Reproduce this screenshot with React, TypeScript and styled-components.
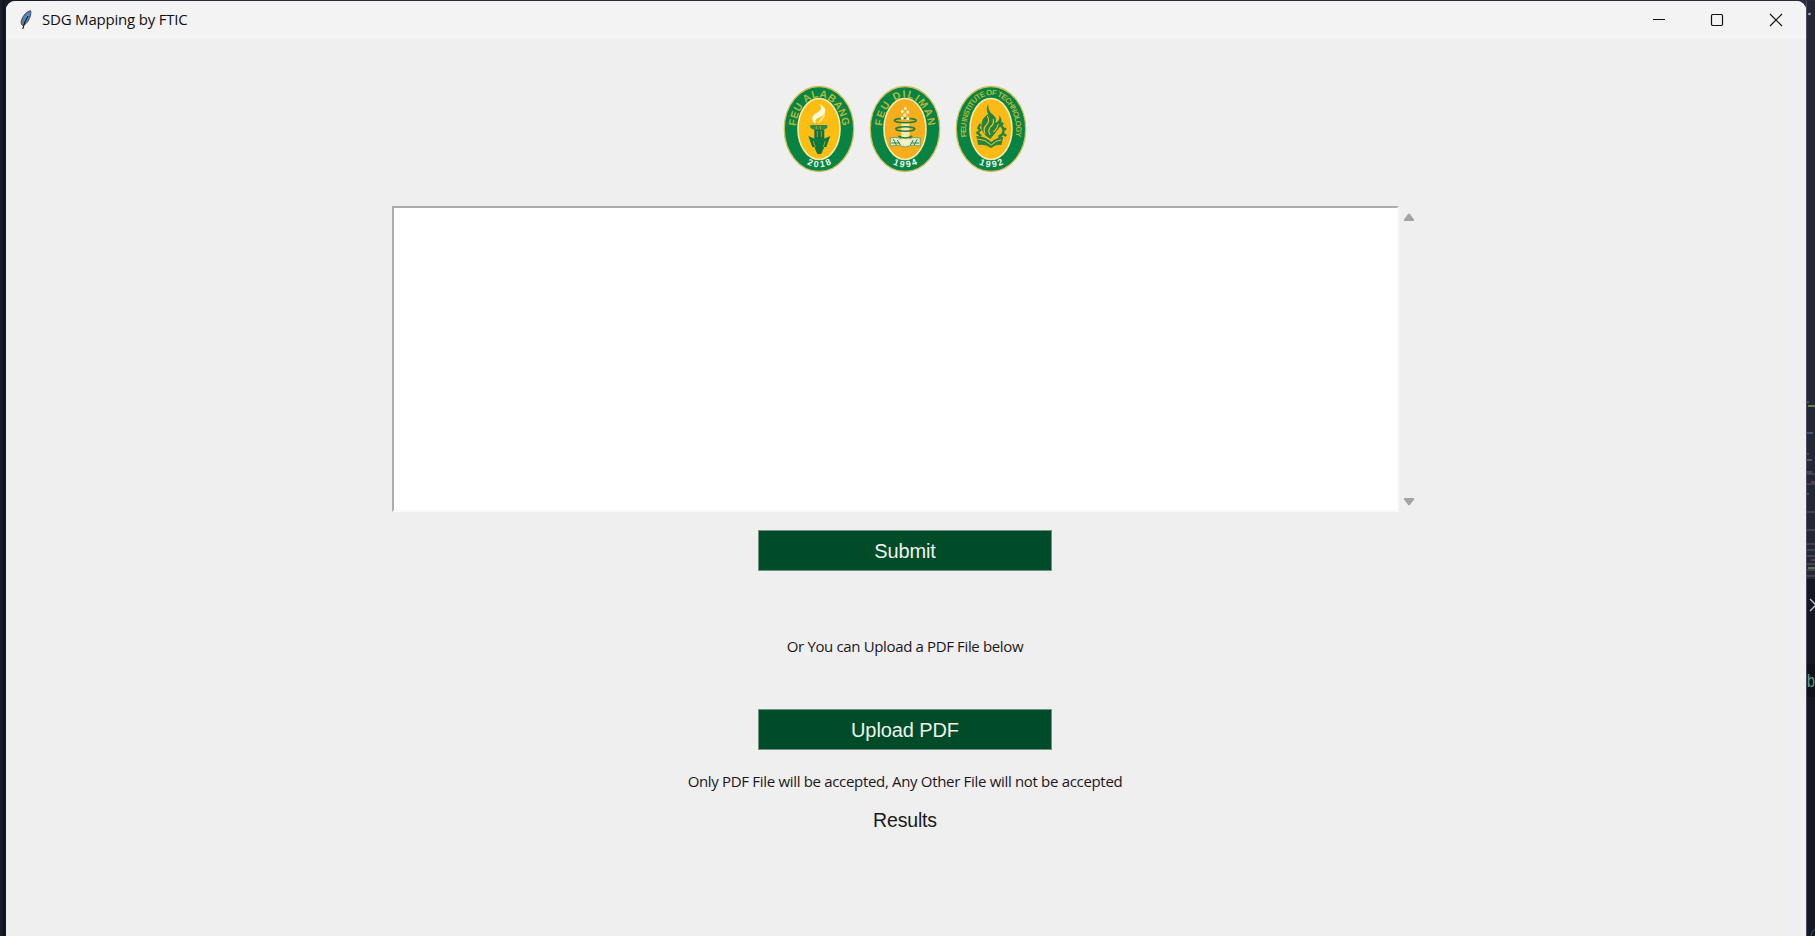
import React from "react";
import styled, { createGlobalStyle } from "styled-components";

const Global = createGlobalStyle`
  * { box-sizing: border-box; }
  html, body { margin: 0; overflow: hidden; background: #1d1e2d; }
`;
const Desktop = styled.div`
  display: grid;
  grid-template-columns: 6px 1800px 9px;
  height: 936px;
  padding-top: 1px;
  background: linear-gradient(90deg, #171926 0, #171926 30px, #2b2c3e 60px);
`;
const Left = styled.div`
  background: linear-gradient(90deg, #1c1e2c 0 2px, #11131f 3px 5px, #25283a 6px);
`;
const Window = styled.main`
  display: flex;
  flex-direction: column;
  background: #efefef;
  border-radius: 9px 9px 0 0;
  overflow: hidden;
`;
const TitleBar = styled.header`
  display: flex;
  height: 38px;
  flex: none;
  align-items: center;
  background: #f3f3f3;
  padding: 0 1px 0 14px;
`;
const Title = styled.span`
  flex: 1;
  margin-left: 10px;
  padding-bottom: 2px;
  font: 15px/20px "Open Sans", sans-serif;
  letter-spacing: -0.2px;
  color: #111;
`;
const Control = styled.button`
  width: 58.5px;
  height: 38px;
  padding: 0;
  border: 0;
  background: transparent;
  display: grid;
  place-items: center;
`;
const Content = styled.section`
  display: flex;
  flex-direction: column;
  align-items: center;
  padding: 39px 2px 0 0;
`;
const Seals = styled.div`
  display: flex;
  height: 102px;
`;
const Editor = styled.div`
  display: flex;
  width: 1026px;
  height: 306px;
  margin-top: 26px;
`;
const TextBox = styled.textarea`
  width: 1007px;
  height: 306px;
  resize: none;
  outline: none;
  background: #fff;
  border: 2px solid;
  border-color: #acacac #f9f9f9 #f9f9f9 #acacac;
`;
const ScrollTrack = styled.div`
  flex: 1;
  display: flex;
  flex-direction: column;
  justify-content: space-between;
  align-items: center;
  padding: 7px 0 6px;
`;
const Button = styled.button`
  width: 294px;
  height: 41px;
  padding: 1px 0 0;
  border: 1px solid #6f9482;
  background: #004b28;
  color: #eef3ef;
  font: 20px/38px "Liberation Sans", sans-serif;
  letter-spacing: -0.1px;
`;
const Note = styled.p<{ $spacing: number }>`
  margin: 0;
  font: 15px/20px "Open Sans", sans-serif;
  letter-spacing: ${(p) => p.$spacing}px;
  white-space: nowrap;
  color: #1c1620;
`;
const Results = styled.h2`
  margin: 0;
  font: 400 19.5px/24px "Liberation Sans", sans-serif;
  letter-spacing: -0.15px;
  color: #1a1a1a;
`;
const Gap = styled.div<{ $h: number }>`
  height: ${(p) => p.$h}px;
`;
const Peek = styled.aside`
  overflow: hidden;
  border-left: 1px solid #4b4c55;
  background: #24273a;
`;

const Feather = () => (
  <svg width="12" height="20" viewBox="0 0 12 20">
    <path d="M10.7 .8C7 1 2.500 6 1.300 11c-.6 2 .2 3.500 1 4.300C6 15 8.500 11 10 7c.8-2.400 1-5 .7-6.200z" fill="#6d7c8e" stroke="#333b45" strokeWidth=".9" />
    <path d="M9.800 2C7 4 4 8 3.500 13 7 11 9.500 6 9.800 2z" fill="#4d9cec" stroke="#3f86d3" />
    <path d="M8 6C6 9 4 12 2.800 19" fill="none" stroke="#171b22" strokeWidth="1.200" />
  </svg>
);

const Torch = () => (
  <g>
    <path d="M45 26c9 4 7 10 1 13-5 2-6 4-4 7-6-3-5-8 0-11 5-3 6-5 3-9z" fill="#fffbd8" />
    <path d="M50 35c2 5-3 7-6 11 0-5 5-6 6-11z" fill="#fff0a0" />
    <path d="M36 47h17v3l-4 2H40l-4-2z" fill="#2c8a4b" />
    <path d="M40 52h10v9H40z" fill="#12713f" />
    <path d="M34 58l7 3h8l7-3-4 11h-2l-3 7h-4l-3-7h-2z" fill="#087841" />
    <path d="M42 48v3M46 48v3M43 53v6M47 53v6M39 63l2 6M51 63l-2 6" stroke="#d0a52a" strokeWidth=".8" />
  </g>
);
const Rings = () => (
  <g fill="none">
    <path d="M30 60q8-2 15 3 7-5 15-3v8q-8-2-15 1-7-3-15-1z" fill="#e3ebcf" stroke="#5d9a55" strokeWidth=".8" />
    <path d="M33 61l3 6M37 62l3 5M57 61l-3 6M53 62l-3 5M31 65h8M59 65h-8" stroke="#28824a" strokeWidth="1" />
    <path d="M41 44h8v20l-4 3-4-3z" fill="#fff4c4" opacity=".85" />
    <g stroke="#1e8040" strokeWidth="1.600">
      <ellipse cx="45" cy="42.500" rx="11" ry="2.200" />
      <ellipse cx="45" cy="51" rx="9.500" ry="2.200" />
      <path d="M38 58q7 4 14 0" />
    </g>
    <g fill="#fff8dc">
      <circle cx="45" cy="30.500" r="1.400" /><circle cx="42" cy="33.500" r="1.400" /><circle cx="47.500" cy="34" r="1.400" />
      <circle cx="44.500" cy="37" r="1.700" /><circle cx="42" cy="40" r="1.600" /><circle cx="47.500" cy="40.500" r="1.600" />
    </g>
  </g>
);
const FlameGear = () => (
  <g fill="none" stroke="#23843d">
    <path d="M30 58q9 0 15 6 6-5 12-5l-2 8q-5-1-10 3-6-4-13-3z" fill="#23843d" stroke="none" />
    <path d="M42 26q-1 7 5 11 4 3 2 8 5-2 4-8 5 7-1 14-3 4-8 10-9-5-9-13 0-8 7-12-3-5 0-10z" fill="#23843d" stroke="none" />
    <path d="M41 38q3 5-1 9-4 4-1 9M47 41q1 5-3 8-3 4 0 8M52 46q-1 5-5 8" stroke="#f2c629" strokeWidth="1.100" />
    <path d="M54 47q4 3 3 7t-5 5" strokeWidth="2.400" />
    <path d="M54 47l3-2M57 51h3M57 56l3 2" strokeWidth="2.600" />
    <path d="M34 46l-2 4 2 2-3 3 4 3" strokeWidth="2.200" />
    <path d="M31 61q8 0 14 6 5-5 10-5" stroke="#e5cf43" strokeWidth="1" />
  </g>
);

type SealProps = { id: string; name: string; year: string; gold: string; size: number; length: number; arc: string; children: React.ReactNode };
const wideArc = "M21.200 53A23.500 33.500 0 0 1 68.200 53";
const longArc = "M20.500 61A25 35 0 1 1 68.900 61";
const Seal = ({ id, name, year, gold, size, length, arc, children }: SealProps) => (
  <svg width="86" height="102" viewBox="1.700 0 86 102">
    <ellipse cx="44.700" cy="51" rx="34.700" ry="42.500" fill="#078344" stroke="#d0be50" strokeWidth="1.300" />
    <ellipse cx="44.700" cy="51" rx="21" ry="30.500" fill={gold} stroke="#f2edaa" strokeWidth="1.600" />
    {children}
    <path id={id} d={arc} fill="none" />
    <text fill="#b5b838" fontFamily="Liberation Sans" fontWeight="700" fontSize={size}>
      <textPath href={`#${id}`} startOffset="50%" textAnchor="middle" textLength={length}>{name}</textPath>
    </text>
    <path id={`${id}y`} d="M27 82.500Q44.700 96 63 82.500" fill="none" />
    <text fill="#f2f7ec" fontFamily="Liberation Sans" fontWeight="700" fontSize="9">
      <textPath href={`#${id}y`} startOffset="50%" textAnchor="middle" textLength="26">{year}</textPath>
    </text>
  </svg>
);

const lines: [number, string, number, number][] = [
  [401, "#34536b", 0, 2], [405, "#727c50", 1, 7], [432, "#405671", 0, 6], [453, "#384765", 0, 2], [459, "#52624a", 0, 5], [471, "#3d486a", 0, 5],
  [473, "#414450", 0, 8], [481, "#72344b", 4, 4], [483, "#414450", 0, 8], [493, "#34536b", 0, 2], [511, "#414450", 0, 8], [529, "#414450", 0, 8],
  [543, "#414450", 0, 8], [549, "#414450", 0, 8], [555, "#414450", 0, 8], [559, "#71344a", 4, 4], [563, "#414450", 0, 8], [567, "#63714b", 1, 7],
  [569, "#414450", 0, 8], [575, "#414450", 0, 8],
];

export default function App() {
  return (
    <>
      <Global />
      <Desktop>
        <Left />
        <Window>
          <TitleBar>
            <Feather />
            <Title>SDG Mapping by FTIC</Title>
            <Control aria-label="Minimize"><svg width="14" height="14"><path d="M1 6.500h12" stroke="#111" /></svg></Control>
            <Control aria-label="Maximize"><svg width="14" height="14"><rect x="1.500" y="1.500" width="11" height="11" rx="1.200" fill="none" stroke="#111" strokeWidth="1.200" /></svg></Control>
            <Control aria-label="Close"><svg width="14" height="14"><path d="M1 1l12 12M13 1L1 13" stroke="#111" strokeWidth="1.200" /></svg></Control>
          </TitleBar>
          <Content>
            <Seals>
              <Seal id="alabang" name="FEU ALABANG" year="2018" gold="#fdbd13" size={10.5} length={80} arc={wideArc}><Torch /></Seal>
              <Seal id="diliman" name="FEU DILIMAN" year="1994" gold="#f8ad1d" size={10.5} length={80} arc={wideArc}><Rings /></Seal>
              <Seal id="tech" name="FEU INSTITUTE OF TECHNOLOGY" year="1992" gold="#fcba16" size={7.8} length={108} arc={longArc}><FlameGear /></Seal>
            </Seals>
            <Editor>
              <TextBox />
              <ScrollTrack>
                <svg width="12" height="9"><path d="M5 1.200q1-1.200 2 0l4 5.300q.7 1.500-.8 1.500H1.800Q.3 8 1 6.500z" fill="#a3a3a3" /></svg>
                <svg width="12" height="9"><path d="M5 7.800q1 1.200 2 0l4-5.300Q11.700 1 10.200 1H1.800Q.3 1 1 2.500z" fill="#a3a3a3" /></svg>
              </ScrollTrack>
            </Editor>
            <Gap $h={18} />
            <Button>Submit</Button>
            <Gap $h={65} />
            <Note $spacing={-0.36}>Or You can Upload a PDF File below</Note>
            <Gap $h={53} />
            <Button>Upload PDF</Button>
            <Gap $h={21} />
            <Note $spacing={-0.32}>Only PDF File will be accepted, Any Other File will not be accepted</Note>
            <Gap $h={17} />
            <Results>Results</Results>
          </Content>
        </Window>
        <Peek>
          <svg width="8" height="935" viewBox="0 1 8 935">
            <path d="M0 579h8v357H0z" fill="#151824" />
            <path d="M0 664h8v33H0z" fill="#10121b" />
            {lines.map(([y, c, x, w]) => <path key={y} d={`M${x} ${y}h${w}v2H${x}z`} fill={c} />)}
            <path d="M3 599l6 6-6 6" stroke="#c8cbd0" strokeWidth="1.300" fill="none" />
            <text x="0" y="687" fill="#5aa58f" fontFamily="Liberation Sans" fontSize="18" textLength="8" lengthAdjust="spacingAndGlyphs">b</text>
            <path d="M8 929q-4 2-4 7" stroke="#3d4a80" fill="none" />
            <circle cx="2.500" cy="14" r="1.300" fill="#aaa" />
          </svg>
        </Peek>
      </Desktop>
    </>
  );
}
